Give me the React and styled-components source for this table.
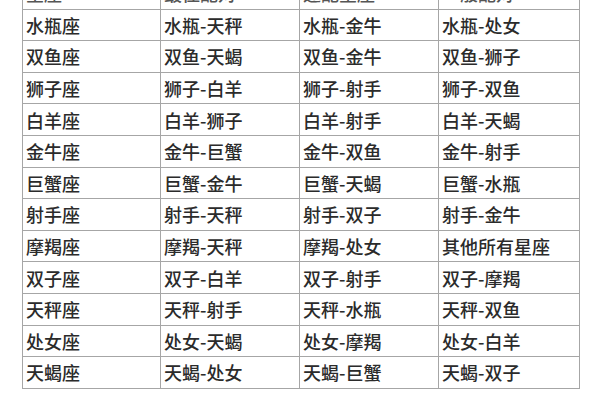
import React from "react";
import styled, { createGlobalStyle } from "styled-components";

const Global = createGlobalStyle`
  html, body { margin: 0; padding: 0; background: #fff; }
  body { width: 600px; height: 400px; overflow: hidden; }
`;

const Page = styled.div`
  width: 600px;
  height: 400px;
  overflow: hidden;
  padding-left: 22px;
  box-sizing: border-box;
`;

const Table = styled.table`
  margin-top: -23px;
  border-collapse: collapse;
  table-layout: fixed;
  width: 557px;
  font-family: "Noto Sans CJK SC", "Noto Sans", sans-serif;
  font-size: 18px;
  font-weight: 500;
  color: #2b2b2b;
`;

const Row = styled.tr`
  height: 31.6px;
`;

const Cell = styled.td`
  border: 1.5px solid #a6a6a6;
  padding: 0 0 0 3px;
  height: 31.6px;
  box-sizing: border-box;
  line-height: 1;
  vertical-align: middle;
  white-space: nowrap;
  overflow: hidden;
  color: ${(p) => (p.$head ? "#555" : "#2b2b2b")};
`;

const Col = styled.col`
  width: ${(p) => p.$w}px;
`;

const header = ["星座", "最佳配对", "速配星座", "一般配对"];

const rows = [
  ["水瓶座", "水瓶-天秤", "水瓶-金牛", "水瓶-处女"],
  ["双鱼座", "双鱼-天蝎", "双鱼-金牛", "双鱼-狮子"],
  ["狮子座", "狮子-白羊", "狮子-射手", "狮子-双鱼"],
  ["白羊座", "白羊-狮子", "白羊-射手", "白羊-天蝎"],
  ["金牛座", "金牛-巨蟹", "金牛-双鱼", "金牛-射手"],
  ["巨蟹座", "巨蟹-金牛", "巨蟹-天蝎", "巨蟹-水瓶"],
  ["射手座", "射手-天秤", "射手-双子", "射手-金牛"],
  ["摩羯座", "摩羯-天秤", "摩羯-处女", "其他所有星座"],
  ["双子座", "双子-白羊", "双子-射手", "双子-摩羯"],
  ["天秤座", "天秤-射手", "天秤-水瓶", "天秤-双鱼"],
  ["处女座", "处女-天蝎", "处女-摩羯", "处女-白羊"],
  ["天蝎座", "天蝎-处女", "天蝎-巨蟹", "天蝎-双子"],
];

export default function App() {
  return (
    <>
      <Global />
      <Page>
        <Table>
          <colgroup>
            <Col $w={138} />
            <Col $w={139} />
            <Col $w={139} />
            <Col $w={141} />
          </colgroup>
          <tbody>
            <Row>
              {header.map((h, i) => (
                <Cell key={i} $head>
                  {h}
                </Cell>
              ))}
            </Row>
            {rows.map((r, i) => (
              <Row key={i}>
                {r.map((c, j) => (
                  <Cell key={j}>{c}</Cell>
                ))}
              </Row>
            ))}
          </tbody>
        </Table>
      </Page>
    </>
  );
}
